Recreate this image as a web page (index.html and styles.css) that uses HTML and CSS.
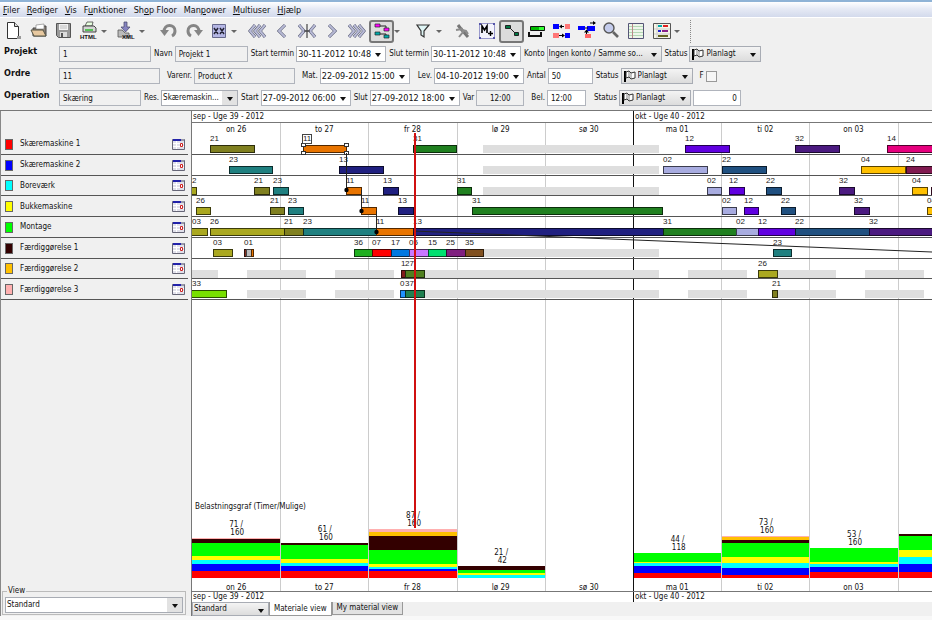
FILE: index.html
```html
<!DOCTYPE html>
<html lang="da">
<head>
<meta charset="utf-8">
<title>Produktionsplan</title>
<link rel="stylesheet" href="styles.css">
</head>
<body>
<nav class="menubar">
  <a href="#"><u>F</u>iler</a><a href="#"><u>R</u>ediger</a><a href="#"><u>V</u>is</a><a href="#">F<u>u</u>nktioner</a><a href="#">Sh<u>o</u>p Floor</a><a href="#">Man<u>p</u>ower</a><a href="#"><u>M</u>ultiuser</a><a href="#"><u>Hj</u>ælp</a>
</nav>

<div class="toolbar" role="toolbar">
  <button class="tool" aria-label="Ny"><svg width="18" height="20" viewBox="0 0 18 20"><path d="M2.500 1.500h7l4 4v12h-11z" fill="#fff" stroke="#333"/><path d="M9.500 1.500v4h4" fill="#ddd" stroke="#333"/><path d="M12 15h4v3h-4z" fill="#999"/></svg></button>
  <button class="tool" aria-label="Åbn"><svg width="18" height="20" viewBox="0 0 18 20"><path d="M3 15V7h5l1-2h7v10z" fill="#8c8279" stroke="#444"/><path d="M6 4l8-1v5H6z" fill="#fff" stroke="#777" stroke-width=".6"/><path d="M1 9h12l3 6H4z" fill="#e8c9a0" stroke="#554"/></svg></button>
  <button class="tool" aria-label="Gem"><svg width="18" height="20" viewBox="0 0 18 20"><path d="M1.500 2.500h14v14h-12l-2-2z" fill="#999" stroke="#555"/><path d="M4 3h9v6H4z" fill="#f2f2f2"/><path d="M5 5h7M5 7h7" stroke="#aaa" stroke-width=".7"/><path d="M5 11h7v5H5z" fill="#ddd"/><path d="M6 12h2v4H6z" fill="#555"/></svg></button>
  <button class="tool" aria-label="Eksporter HTML"><svg width="20" height="20" viewBox="0 0 20 20"><path d="M6 5l2-4h6l-1 4z" fill="#e8ffe0" stroke="#444" stroke-width=".8"/><path d="M4 5h11l2 2v4H4z" fill="#d5d5d5" stroke="#333" stroke-width=".9"/><path d="M6 9h8" stroke="#2b2" stroke-width="1.4"/><text x="1" y="18" class="tiny">HTML</text></svg></button>
  <button class="drop" aria-label="Flere eksporter"></button>
  <button class="tool" aria-label="Importer XML"><svg width="20" height="20" viewBox="0 0 20 20"><path d="M7 1h3v5h3l-4.500 5L4 6h3z" fill="#8684c0" stroke="#446" stroke-width=".7"/><path d="M1 9h4l3 3h4v4H1z" fill="#bbb" stroke="#555" stroke-width=".8"/><text x="5" y="18" class="tiny">XML</text></svg></button>
  <button class="drop" aria-label="Flere importer"></button>
  <button class="tool apart" aria-label="Fortryd"><svg width="18" height="20" viewBox="0 0 18 20"><path d="M4 11C4 2 15 3 15 10c0 2-1 4-3 5" fill="none" stroke="#858585" stroke-width="3"/><path d="M0 9h9l-4.500 6z" fill="#858585"/></svg></button>
  <button class="tool" aria-label="Gentag"><svg width="18" height="20" viewBox="0 0 18 20"><path d="M14 11C14 2 3 3 3 10c0 2 1 4 3 5" fill="none" stroke="#858585" stroke-width="3"/><path d="M18 9h-9l4.500 6z" fill="#858585"/></svg></button>
  <button class="tool" aria-label="Fjern"><svg width="18" height="20" viewBox="0 0 18 20"><path d="M2.500 3.500h13v13h-13z" fill="#b4b6e4" stroke="#66688c"/><path d="M4 7l4 6M8 7l-4 6M10 7l4 6M14 7l-4 6" stroke="#223" stroke-width="1.400"/></svg></button>
  <button class="drop" aria-label="Flere valg"></button>
  <button class="tool" aria-label="Langt tilbage"><svg width="20" height="20" viewBox="0 0 20 20" class="chev"><path d="M8 4l-5 6 5 6M13 4l-5 6 5 6M18 4l-5 6 5 6"/><path d="M8 4l-5 6 5 6M13 4l-5 6 5 6M18 4l-5 6 5 6"/></svg></button>
  <button class="tool" aria-label="Tilbage"><svg width="20" height="20" viewBox="0 0 20 20" class="chev"><path d="M13 4l-6 6 6 6"/><path d="M13 4l-6 6 6 6"/></svg></button>
  <button class="tool" aria-label="Nu"><svg width="20" height="20" viewBox="0 0 20 20" class="chev"><path d="M2 4l5 6-5 6M18 4l-5 6 5 6"/><path d="M2 4l5 6-5 6M18 4l-5 6 5 6"/><path d="M10 3v14M7 10h6" class="thin"/></svg></button>
  <button class="tool" aria-label="Frem"><svg width="20" height="20" viewBox="0 0 20 20" class="chev"><path d="M7 4l6 6-6 6"/><path d="M7 4l6 6-6 6"/></svg></button>
  <button class="tool" aria-label="Langt frem"><svg width="20" height="20" viewBox="0 0 20 20" class="chev"><path d="M2 4l5 6-5 6M7 4l5 6-5 6M12 4l5 6-5 6"/><path d="M2 4l5 6-5 6M7 4l5 6-5 6M12 4l5 6-5 6"/></svg></button>
  <button class="tool pressed" aria-label="Vis ordrer" aria-pressed="true"><svg width="18" height="18" viewBox="0 0 18 18"><path d="M5 4h8v4M5 12h8v3" fill="none" stroke="#222"/><path d="M2 2h5v3H2zM11 6h5v3h-5z" fill="#f0f" stroke="#222" stroke-width=".7"/><path d="M2 10h5v3H2zM11 13h5v3h-5z" fill="#0aa" stroke="#222" stroke-width=".7"/></svg></button>
  <button class="drop" aria-label="Flere visninger"></button>
  <button class="tool apart" aria-label="Filter"><svg width="18" height="20" viewBox="0 0 18 20"><path d="M2 4h12L9 10v6l-3-2v-4z" fill="#dff5f5" stroke="#333" stroke-width="1.200"/></svg></button>
  <button class="drop" aria-label="Flere filtre"></button>
  <button class="tool" aria-label="Værktøj"><svg width="18" height="20" viewBox="0 0 18 20"><path d="M5 4l3 4 7 8" stroke="#777" stroke-width="3" fill="none"/><path d="M3 9l6-1 1 3-4 5M9 9l4 1 2 3" stroke="#8c8c8c" stroke-width="2" fill="none"/></svg></button>
  <button class="tool" aria-label="Materiale"><svg width="18" height="20" viewBox="0 0 18 20"><path d="M1.500 2.500h15v15h-15z" fill="#f4f4fc" stroke="#99c"/><path d="M1 2h2v2H1zM15 2h2v2h-2zM1 16h2v2H1zM15 16h2v2h-2z" fill="#55a"/><path d="M4 12V5l2.500 4L9 5v7" fill="none" stroke="#000" stroke-width="1.600"/><path d="M10 12.500h5M12.500 10v5" stroke="#000" stroke-width="1.400"/></svg></button>
  <button class="tool pressed" aria-label="Vis forbindelser" aria-pressed="true"><svg width="18" height="18" viewBox="0 0 18 18"><path d="M7 6l5 5" stroke="#222"/><path d="M2.500 3.500h5v3h-5zM11.500 10.500h4v3h-4z" fill="#074" stroke="#222"/></svg></button>
  <button class="tool" aria-label="Belastning"><svg width="20" height="20" viewBox="0 0 20 20"><path d="M3.500 5.500h14v4h-14z" fill="#0b0" stroke="#111"/><path d="M12 6h5v3h-5z" fill="#3f3"/><path d="M2 11v4h12v-4" fill="none" stroke="#111" stroke-width="2"/></svg></button>
  <button class="tool" aria-label="Byt"><svg width="20" height="20" viewBox="0 0 20 20"><path d="M1 3h6v5H1zM13 12h5v5h-5z" fill="#00f"/><path d="M13 3h5v5h-5zM1 12h6v5H1z" fill="#f77"/><path d="M8 5.500h4M7 14.500h5" stroke="#000"/><path d="M7 5.500l3-2v4zM13 14.500l-3-2v4z"/></svg></button>
  <button class="tool" aria-label="Flyt"><svg width="20" height="20" viewBox="0 0 20 20"><path d="M1 5h7v4H1zM10 5h8v5h-8z" fill="#00f"/><path d="M8 13h6v4H8z" fill="#f66"/><path d="M8 7h3M9.500 13V9M13 2h5" stroke="#000"/><path d="M7 11.500l2.500-3 2.500 3zM16 0l3 2-3 2z"/></svg></button>
  <button class="tool" aria-label="Zoom"><svg width="18" height="20" viewBox="0 0 18 20"><circle cx="6" cy="7" r="5" fill="#c4ccec" stroke="#555" stroke-width="1.400"/><path d="M10 11l5 5" stroke="#666" stroke-width="2.600"/></svg></button>
  <button class="tool" aria-label="Liste"><svg width="18" height="20" viewBox="0 0 18 20"><path d="M.500 2.500h15v15H.500z" fill="#eef6ea" stroke="#557"/><path d="M1 5.500h14M1 8.500h14M1 11.500h14M1 14.500h14" stroke="#b4d8b4"/><path d="M4.500 3v14" stroke="#b88"/></svg></button>
  <button class="tool" aria-label="Diagram"><svg width="18" height="20" viewBox="0 0 18 20"><path d="M.500 2.500h17v15H.500z" fill="#f6f6e8" stroke="#555"/><path d="M1 8h16M1 13h16M4 3v14" stroke="#ccc"/><path d="M5 5h4" stroke="#0aa" stroke-width="2"/><path d="M10 5h5" stroke="#d22" stroke-width="2"/><path d="M5 10h3" stroke="#22c" stroke-width="2"/><path d="M9 10h6" stroke="#828" stroke-width="2"/><path d="M5 15h10" stroke="#662" stroke-width="2"/></svg></button>
  <button class="drop" aria-label="Flere diagrammer"></button>
  <span class="grip"></span>
</div>

<form class="details">
  <div class="line">
    <b>Projekt</b>
    <input class="w92" aria-label="Projekt nr." value="1" readonly>
    <label for="navn">Navn</label><input id="navn" class="w73" value="Projekt 1" readonly>
    <label for="st">Start termin</label><span class="combo white"><input id="st" class="date" value="30-11-2012 10:48"></span>
    <label for="sl">Slut termin</label><span class="combo white"><input id="sl" class="date" value="30-11-2012 10:48"></span>
    <label for="ko">Konto</label><span class="combo"><select id="ko" class="w115"><option>Ingen konto / Samme so...</option></select></span>
    <label for="s1">Status</label><span class="combo flag"><svg width="12" height="12" viewBox="0 0 12 12"><path d="M1 1v11" stroke="#000" stroke-width="2"/><path d="M2 2l3-1 2 2 4-1v6l-4 1-2-2-3 1z" fill="#fff" stroke="#333"/><path d="M5 1v6M7 3v6" stroke="#555" stroke-width=".7"/></svg><select id="s1" class="status"><option>Planlagt</option></select></span>
  </div>
  <div class="line">
    <b>Ordre</b>
    <input class="w101" aria-label="Ordre nr." value="11" readonly>
    <label for="va" class="wide">Varenr.</label><input id="va" class="w101" value="Product X" readonly>
    <label for="ma" class="wide">Mat.</label><span class="combo white"><input id="ma" class="date" value="22-09-2012 15:00"></span>
    <label for="le" class="wider">Lev.</label><span class="combo white"><input id="le" class="date" value="04-10-2012 19:00"></span>
    <label for="an">Antal</label><input id="an" class="w45 white" value="50">
    <label for="s2">Status</label><span class="combo flag"><svg width="12" height="12" viewBox="0 0 12 12"><path d="M1 1v11" stroke="#000" stroke-width="2"/><path d="M2 2l3-1 2 2 4-1v6l-4 1-2-2-3 1z" fill="#fff" stroke="#333"/><path d="M5 1v6M7 3v6" stroke="#555" stroke-width=".7"/></svg><select id="s2" class="status"><option>Planlagt</option></select></span>
    <label for="f" class="wide">F</label><input id="f" type="checkbox">
  </div>
  <div class="line">
    <b>Operation</b>
    <input class="w82" aria-label="Operation" value="Skæring" readonly>
    <label for="re">Res.</label><span class="combo white"><select id="re" class="w77"><option>Skæremaskin...</option></select></span>
    <label for="os">Start</label><span class="combo white"><input id="os" class="date" value="27-09-2012 06:00"></span>
    <label for="oe">Slut</label><span class="combo white"><input id="oe" class="date" value="27-09-2012 18:00"></span>
    <label for="vr">Var</label><input id="vr" class="w48 mid" value="12:00" readonly>
    <label for="be" class="wide">Bel.</label><input id="be" class="w39 white" value="12:00">
    <label for="s3" class="wider">Status</label><span class="combo flag"><svg width="12" height="12" viewBox="0 0 12 12"><path d="M1 1v11" stroke="#000" stroke-width="2"/><path d="M2 2l3-1 2 2 4-1v6l-4 1-2-2-3 1z" fill="#fff" stroke="#333"/><path d="M5 1v6M7 3v6" stroke="#555" stroke-width=".7"/></svg><select id="s3" class="status"><option>Planlagt</option></select></span>
    <input class="w48 white right" aria-label="Antal" value="0">
  </div>
</form>

<main class="plan">
  <aside class="resources">
    <ul id="resources"></ul>
    <fieldset>
      <legend>View</legend>
      <span class="combo white"><select aria-label="View"><option>Standard</option></select></span>
    </fieldset>
  </aside>
  <section class="board">
    <div class="timeline">
      <div class="weeks columns"><span>sep - Uge 39 - 2012</span><span>okt - Uge 40 - 2012</span></div>
      <div class="plot">
        <div class="guides columns" id="guides"></div>
        <div class="days columns" data-days></div>
        <div class="lanes" id="lanes"></div>
        <div class="load">
          <div class="load-title">Belastningsgraf (Timer/Mulige)</div>
          <div class="stacks columns" id="stacks"></div>
        </div>
        <div class="days low columns" data-days></div>
        <div class="now"></div>
      </div>
      <div class="weeks low columns"><span>sep - Uge 39 - 2012</span><span>okt - Uge 40 - 2012</span></div>
    </div>
    <div class="tabs">
      <span class="combo"><select class="w77" aria-label="Visning"><option>Standard</option></select></span>
      <button class="tab active">Materiale view</button><button class="tab">My material view</button>
    </div>
  </section>
</main>
<script src="plan.js"></script>
</body>
</html>
```
FILE: styles.css
```css
* { box-sizing: border-box; }

body {
  margin: 0;
  min-height: 100vh;
  display: flex;
  flex-direction: column;
  background: #f0f0f0;
  color: #111;
  font: 8px/10px "DejaVu Sans Condensed", "DejaVu Sans", sans-serif;
  border-bottom: 4px solid #f8f8f8;
}

button, input, select { font: inherit; color: inherit; margin: 0; border-radius: 0; }

.menubar {
  display: flex;
  gap: 7px;
  height: 18px;
  padding: 0 3px;
  align-items: center;
  border-top: 2px solid #8fb3d6;
  border-bottom: 1px solid #fff;
  background: linear-gradient(#fff, #e6eaf5 45%, #d3daec);
  font-size: 9px;
}
.menubar a { color: #111; text-decoration: none; }

.toolbar { display: flex; height: 26px; padding: 0 1px; align-items: center; }
.tool {
  width: 25px;
  height: 23px;
  padding: 0;
  border: 0;
  background: none;
  display: flex;
  align-items: center;
  justify-content: center;
}
.pressed { border: 2px solid #777; border-radius: 3px; background: #dcdcdc; }
.apart { margin-left: 4px; }
.drop { width: 13px; height: 20px; padding: 0; border: 0; background: none; }
.drop::before {
  content: "";
  display: block;
  width: 0;
  border: 3px solid transparent;
  border-top-color: #666;
  border-bottom: 0;
}
.grip { height: 23px; margin-left: 3px; border-left: 1px dotted #888; }
.tiny { font: bold 6px "Liberation Sans", sans-serif; fill: #111; }
.chev path { fill: none; stroke: #50546c; stroke-width: 3; }
.chev path + path { stroke: #b8bad6; stroke-width: 2; }
.chev path.thin { stroke: #222; stroke-width: 1; }

.details { display: flex; flex-direction: column; gap: 6px; padding: 2px 0 4px 4px; }
.line { display: flex; gap: 2px; align-items: center; height: 16px; }
.line b { width: 53px; height: 16px; font-size: 9px; line-height: 10px; }
.line label { padding-left: 1px; white-space: nowrap; }
.line .wide { padding-left: 5px; }
.line .wider { padding-left: 6px; }
.line input {
  height: 16px;
  padding: 0 3px;
  border: 1px solid #b0b4bc;
  background: #f0f0f0;
}
.line input.white { background: #fff; }
.line .date { width: 90px; font-size: 9px; padding: 0 1px; background: #fff; }
.line input[type="checkbox"] { appearance: none; width: 11px; height: 11px; padding: 0; border-color: #999; background: #f6f6f6; }
.line .mid { text-align: center; }
.line .right { text-align: right; }
.w39 { width: 39px; }
.w45 { width: 45px; }
.w48 { width: 48px; }
.w73 { width: 73px; }
.w77 { width: 77px; }
.w82 { width: 82px; }
.w92 { width: 92px; }
.w101 { width: 101px; }
.w115 { width: 115px; }

.combo { position: relative; display: flex; }
.combo::after {
  content: "";
  position: absolute;
  right: 5px;
  top: 7px;
  border: 3px solid transparent;
  border-top: 4px solid #111;
  border-bottom: 0;
  pointer-events: none;
}
.combo select {
  appearance: none;
  height: 16px;
  padding: 0 1px;
  border: 1px solid #a8acb4;
  background: linear-gradient(#f4f4f4, #dcdcdc);
}
.combo.white select { background: linear-gradient(to left, #e2e2e2 15px, #fff 15px); }
.combo .status { width: 72px; padding-left: 16px; }
.flag svg { position: absolute; left: 3px; top: 2px; }

.plan { flex: 1; display: flex; border-top: 1px solid #777; }

.resources {
  width: 188px;
  display: flex;
  flex-direction: column;
  justify-content: space-between;
  border-left: 1px solid #888;
}
.resources ul {
  list-style: none;
  margin: 23px 0 0;
  padding: 0;
  height: 166px;
  display: grid;
  grid-auto-rows: 1fr;
}
.resources li {
  display: flex;
  align-items: center;
  gap: 7px;
  padding: 1px 3px 0 4px;
  border-bottom: 1px solid #555;
}
.swatch { width: 8px; height: 11px; border: 1px solid #666; }
.resources li svg { margin-left: auto; }

fieldset {
  margin: 0 2px 1px 1px;
  padding: 1px 2px 1px;
  border: 1px solid #bbb;
}
legend { padding: 0 1px; margin-left: 2px; }
fieldset select { width: 100%; }

.board { flex: 1; min-width: 0; margin-left: 3px; display: flex; flex-direction: column; border-left: 1px solid #777; }
.timeline { flex: 1; display: flex; flex-direction: column; background: #fff; overflow: hidden; }
.columns { display: grid; grid-template-columns: repeat(8, minmax(0, 882fr)) minmax(0, 344fr); }
.weeks { height: 12px; border-bottom: 1px solid #777; line-height: 12px; }
.weeks span { grid-column: span 5; padding-left: 1px; }
.weeks span + span { grid-column: 6 / -1; border-left: 1px solid #111; }
.weeks.low { height: 11px; line-height: 10px; border-top: 1px solid #777; border-bottom: 0; }

.plot { position: relative; flex: 1; display: flex; flex-direction: column; }
.guides { position: absolute; inset: 0; }
.guides i { border-left: 1px solid #ccc; }
.guides i:first-child { border-color: transparent; }
.guides i.week { border-color: #111; }
.days { position: relative; height: 11px; line-height: 13px; text-align: center; }
.days.low { height: 13px; line-height: 19px; }
.now { position: absolute; left: 30%; top: 10px; bottom: 63px; width: 2px; background: #d01010; }

.lanes { position: relative; height: 166px; display: grid; grid-auto-rows: minmax(0, 1fr); }
.lane { position: relative; border-bottom: 1px solid #555; }
.bar, .idle, .tag { position: absolute; top: 11px; height: 8px; }
.bar { border: 1px solid rgba(0, 0, 0, 0.65); }
.idle { background: #dedede; }
.tag { top: 1px; font: 8px/8px "Liberation Sans", sans-serif; color: #222; }
.boxed { outline: 1px solid #444; background: #fff; }
.handle { position: absolute; width: 5px; height: 4px; border: 1px solid #333; background: #fff; }
.handle.nw, .handle.ne { top: -3px; }
.handle.sw, .handle.se { bottom: -3px; }
.handle.nw, .handle.sw { left: -3px; }
.handle.ne, .handle.se { right: -3px; }
.links { position: absolute; inset: 0; width: 100%; height: 100%; pointer-events: none; }

.load { position: relative; margin-top: auto; }
.load-title { height: 9px; padding-left: 3px; }
.stacks { align-items: end; min-height: 67px; }
.stack { margin-left: 1px; }
.stack:first-child { margin-left: 0; }
.stack p { margin: 0; padding-bottom: 1px; line-height: 8px; text-align: center; white-space: pre; }
.stack div { height: calc(var(--n) * 1px); }

.tabs { display: flex; height: 14px; align-items: flex-start; background: #f0f0f0; }
.tabs select { height: 14px; }
.tab { height: 13px; padding: 0 4px; border: 1px solid #999; border-top: 0; background: #e2e2e2; }
.tab.active { height: 14px; background: #fff; }
```
FILE: plan.js
```js
// Horizontal positions are given on a scale of 740 units for the visible period.
const SPAN = 740;
const pct = v => (v / SPAN * 100) + '%';

const colors = {
  o: '#808020', y: '#aaa820', t: '#208080', g: '#208020', r: '#e87400', n: '#202080',
  v: '#6000e0', p: '#4b1a80', l: '#a8ace0', b: '#205080', a: '#ffc000', m: '#801a50'
};

const lanes = [
  { name: 'Skæremaskine 1', color: '#f00', idle: [[291, 467]], bars: [
    ['21', 18, 63, 'o'], ['11', 111, 155, 'r', true], ['31', 221, 265, 'g'], ['12', 493, 538, 'v'],
    ['32', 603, 648, 'p'], ['14', 695, 742, '#e6007e']] },
  { name: 'Skæremaskine 2', color: '#00f', idle: [[291, 467]], bars: [
    ['23', 37, 81, 't'], ['13', 147, 192, 'n'], ['02', 471, 516, 'l'], ['22', 530, 575, 'b'],
    ['04', 669, 714, 'a'], ['24', 714, 742, 'm']] },
  { name: 'Boreværk', color: '#0ff', idle: [[291, 467]], bars: [
    ['2', -2, 5, 'y'], ['21', 62, 78, 'o'], ['23', 81, 97, 't'], ['11', 154, 170, 'r'], ['13', 191, 207, 'n'],
    ['31', 265, 280, 'g'], ['02', 515, 530, 'l'], ['12', 537, 553, 'v'], ['22', 574, 590, 'b'],
    ['32', 647, 663, 'p'], ['04', 720, 736, 'a'], ['', 739, 745, 'm']] },
  { name: 'Bukkemaskine', color: '#ff0', idle: [], bars: [
    ['26', 4, 19, 'y'], ['21', 78, 93, 'o'], ['23', 96, 112, 't'], ['11', 169, 185, 'r'], ['13', 206, 222, 'n'],
    ['31', 280, 471, 'g'], ['02', 530, 545, 'l'], ['12', 552, 567, 'v'], ['22', 589, 604, 'b'],
    ['32', 662, 678, 'p'], ['04', 735, 745, 'a']] },
  { name: 'Montage', color: '#0f0', idle: [], bars: [
    ['03', -1, 16, 'y'], ['26', 18, 93, 'y'], ['21', 92, 112, 'o'], ['23', 111, 185, 't'], ['11', 184, 222, 'r'],
    ['13', 221, 472, 'n'], ['31', 471, 545, 'g'], ['02', 544, 567, 'l'], ['12', 566, 604, 'v'],
    ['22', 603, 678, 'b'], ['32', 677, 742, 'p']] },
  { name: 'Færdiggørelse 1', color: '#300', idle: [[291, 467]], bars: [
    ['03', 21, 41, 'y'], ['01', 52, 55, '#803020'], ['', 54, 60, '#bbb'], ['', 59, 62, 'r'],
    ['36', 162, 181, '#20b020'], ['07', 180, 200, '#f00'], ['17', 199, 218, '#0078e0'], ['05', 217, 237, '#c878ff'],
    ['15', 236, 255, '#00e070'], ['25', 254, 274, '#802080'], ['35', 273, 292, '#805020'], ['23', 581, 600, 't']] },
  { name: 'Færdiggørelse 2', color: '#ffc000', idle: [[0, 26], [55, 114], [143, 202], [232, 467], [496, 555], [586, 644], [673, 732]], bars: [
    ['1', 209, 214, '#801a1a'], ['27', 213, 233, '#508020'], ['26', 566, 586, 'y']] },
  { name: 'Færdiggørelse 3', color: '#ffb0b0', idle: [[55, 114], [143, 202], [232, 467], [496, 555], [585, 644], [673, 732]], bars: [
    ['33', -1, 35, '#78e000'], ['0', 208, 214, '#2090ff'], ['37', 213, 233, '#208050'], ['21', 580, 586, 'o']] }
];

const days = ['on 26', 'to 27', 'fr 28', 'lø 29', 'sø 30', 'ma 01', 'ti 02', 'on 03', ''];

// Load per day, from the top resource down: [lane number, height].
const load = [
  ['71 /\n 160', [[8, 1], [6, 4], [5, 13], [4, 4], [3, 4], [2, 7], [1, 7]]],
  ['61 /\n 160', [[6, 2], [5, 14], [4, 4], [3, 3], [2, 5], [1, 7]]],
  ['87 /\n 160', [[8, 3], [7, 4], [6, 14], [5, 14], [4, 3], [3, 2], [2, 2], [1, 7]]],
  ['21 /\n 42', [[6, 4], [5, 3], [4, 2], [3, 3]]],
  ['', []],
  ['44 /\n 118', [[5, 9], [4, 1], [3, 3], [2, 7], [1, 5]]],
  ['73 /\n 160', [[8, 1], [7, 3], [6, 3], [5, 14], [4, 6], [3, 5], [2, 7], [1, 3]]],
  ['53 /\n 160', [[5, 14], [4, 2], [3, 3], [2, 5], [1, 6]]],
  ['', [[6, 2], [5, 14], [4, 7], [3, 7], [2, 8], [1, 6]]]
];

const calendar = '<svg width="13" height="11" viewBox="0 0 13 11" aria-hidden="true">' +
  '<path d="M.5.5h12v10H.5z" fill="#e0e0ea" stroke="#667"/><path d="M1 0h8v2H1z" fill="#22a"/>' +
  '<path d="M9 0h3v2H9z" fill="#99a"/><path d="M1 4.500h11M1 7.500h11M4.500 2v8" stroke="#fff"/>' +
  '<path d="M8.500 4.500h2v3h-2z" fill="#fff" stroke="#c22"/></svg>';

const handles = ['nw', 'ne', 'sw', 'se'].map(c => `<i class="handle ${c}"></i>`).join('');

document.getElementById('resources').innerHTML = lanes.map(l =>
  `<li><span class="swatch" style="background:${l.color}"></span>${l.name}${calendar}</li>`).join('');

document.getElementById('lanes').innerHTML = lanes.map(l => '<div class="lane">' +
  l.idle.map(([a, b]) => `<span class="idle" style="left:${pct(a)};width:${pct(b - a)}"></span>`).join('') +
  l.bars.map(([, a, b, c, selected]) =>
    `<span class="bar" style="left:${pct(a)};width:${pct(b - a)};background-color:${colors[c] || c}">${selected ? handles : ''}</span>`).join('') +
  l.bars.map(([t, a, , , selected]) => t &&
    `<span class="tag${selected ? ' boxed' : ''}" style="left:${pct(Math.max(a, 0))}">${t}</span>`).join('') +
  '</div>').join('') +
  `<svg class="links" viewBox="0 0 740 166" preserveAspectRatio="none">
    <path d="M154.500 19V56M169.500 56V77M184.500 77V98M221 97L740 118" fill="none" stroke="#222"/>
    <circle cx="154.500" cy="56" r="2.200"/><circle cx="169.500" cy="77" r="2.200"/><circle cx="184.500" cy="98" r="2.200"/></svg>`;

document.querySelectorAll('[data-days]').forEach(row => {
  row.innerHTML = days.map(d => `<span>${d}</span>`).join('');
});

document.getElementById('guides').innerHTML = days.map((d, i) => `<i${i === 5 ? ' class="week"' : ''}></i>`).join('');

document.getElementById('stacks').innerHTML = load.map(([text, parts]) =>
  `<div class="stack"><p>${text}</p>` +
  parts.map(([n, h]) => `<div style="--n:${h};background:${lanes[n - 1].color}"></div>`).join('') +
  '</div>').join('');
```
